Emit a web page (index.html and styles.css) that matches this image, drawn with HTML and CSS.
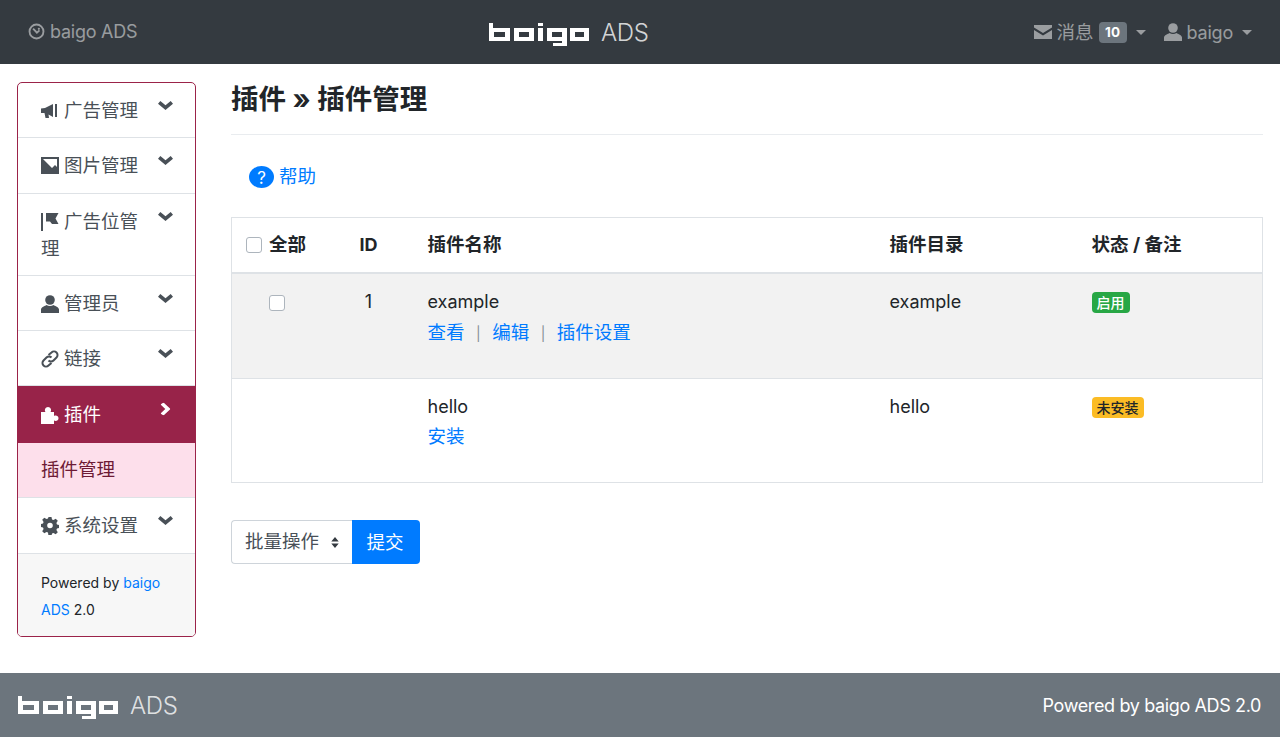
FILE: index.html
```html
<!DOCTYPE html>
<html lang="zh">
<head>
<meta charset="utf-8">
<title>插件管理</title>
<link rel="stylesheet" href="styles.css">
</head>
<body>
<svg class="defs" aria-hidden="true">
  <symbol id="logo" viewBox="0 0 100 24">
    <path fill-rule="evenodd" d="M0 0h4v5h17v13H0zM5 9v5h11V9z"/>
    <path fill-rule="evenodd" d="M25 5h20v13H25zM30 9v5h10V9z"/>
    <path d="M49 0h5v3h-5zM49 5h5v13h-5z"/>
    <path fill-rule="evenodd" d="M58 5h20v18H64v-3h9v-2H58zM63 9v5h10V9z"/>
    <path fill-rule="evenodd" d="M81 5h19v13H81zM86 9v5h9V9z"/>
  </symbol>
  <symbol id="chev" viewBox="0 0 16 10" preserveAspectRatio="none"><path d="M2.500 0 8 4.800 13.500 0 16 3 8 10 0 3z"/></symbol>
</svg>
<header class="topbar">
  <a class="brand-link">
    <svg class="brand-ic" viewBox="0 0 20 20"><circle cx="10" cy="10" r="8.200" fill="none" stroke="currentColor" stroke-width="2.200"/><path d="M6 6.500l4.500 4.800 3-2.600" fill="none" stroke="currentColor" stroke-width="2.200"/><circle cx="12.800" cy="6.800" r="1.300" fill="currentColor"/></svg>
    <span>baigo ADS</span>
  </a>
  <div class="top-logo"><svg class="logo-svg"><use href="#logo"/></svg><span class="ads">ADS</span></div>
  <nav class="top-nav">
    <a class="top-item">
      <svg class="top-ic" viewBox="0 0 18 14"><path d="M0 0h18v2.500L9 8 0 2.500zM0 5l9 5.500L18 5v9H0z" fill="currentColor"/></svg>
      <span class="cjk">消息</span><span class="count">10</span><i class="caret"></i>
    </a>
    <a class="top-item">
      <svg class="top-ic user" viewBox="0 0 18 18"><circle cx="9" cy="5" r="4.800" fill="currentColor"/><path d="M0 18v-3.500c0-2.500 4-3.500 5.500-4.500 2 1.400 5 1.400 7 0 1.500 1 5.500 2 5.500 4.500V18z" fill="currentColor"/></svg>
      <span class="tight">baigo</span><i class="caret"></i>
    </a>
  </nav>
</header>

<div class="page">
  <aside class="side">
    <a class="menu-item">
      <span class="menu-label"><svg class="mi" viewBox="0 0 18 18"><path d="M0 6.500 4 6l8-4v13L7.500 12.500 8 16H4.500L3.500 11H0zM14 2h2v13h-2z"/></svg>广告管理</span>
      <svg class="chev"><use href="#chev"/></svg>
    </a>
    <a class="menu-item">
      <span class="menu-label"><svg class="mi" viewBox="0 0 18 18"><path fill-rule="evenodd" d="M0 0h18v17H0zM2 2l9 9 3-3 2 2V2z"/></svg>图片管理</span>
      <svg class="chev"><use href="#chev"/></svg>
    </a>
    <a class="menu-item">
      <span class="menu-label"><svg class="mi" viewBox="0 0 18 18"><path d="M0 0h2v18H0zM5 0h12.500l-3 5.500 3 5.500H11L9 8.500H5z"/></svg>广告位管理</span>
      <svg class="chev"><use href="#chev"/></svg>
    </a>
    <a class="menu-item">
      <span class="menu-label"><svg class="mi" viewBox="0 0 18 18"><circle cx="9" cy="5" r="4.800"/><path d="M0 18v-3.500c0-2.500 4-3.500 5.500-4.500 2 1.400 5 1.400 7 0 1.500 1 5.500 2 5.500 4.500V18z"/></svg>管理员</span>
      <svg class="chev"><use href="#chev"/></svg>
    </a>
    <a class="menu-item">
      <span class="menu-label"><svg class="mi" viewBox="0 0 18 18"><g fill="none" stroke="currentColor" stroke-width="2"><path d="M7.500 5 10.500 2.500a3.500 3.500 0 0 1 5 5L12.500 10.500a3.500 3.500 0 0 1-5 0"/><path d="M10.500 13 7.500 15.500a3.500 3.500 0 0 1-5-5L5.500 7.500a3.500 3.500 0 0 1 5 0"/></g></svg>链接</span>
      <svg class="chev"><use href="#chev"/></svg>
    </a>
    <a class="menu-item active">
      <span class="menu-label"><svg class="mi" viewBox="0 0 18 18"><path d="M0 6h4.500C3 4 4.500 1 7 1s4 3 2.500 5H13v4c1.800-1 4.500-.3 4.500 2.200S14.800 15.500 13 14.500V18H0z"/></svg>插件</span>
      <svg class="chev right"><use href="#chev"/></svg>
    </a>
    <a class="sub-item">插件管理</a>
    <a class="menu-item">
      <span class="menu-label"><svg class="mi" viewBox="0 0 18 18"><path fill-rule="evenodd" d="M7.500 0h3l.5 2.500 1.500.6 2.200-1.400 2.100 2.100-1.400 2.200.6 1.500 2 .5v3l-2 .5-.6 1.500 1.400 2.200-2.100 2.100-2.200-1.400-1.500.6-.5 2.500h-3L7 15.500l-1.500-.6-2.200 1.400-2.100-2.100 1.400-2.200L2 10.500 0 10V7l2-.5L2.600 5 1.200 2.800 3.300.7l2.200 1.400L7 1.500zM9 5.700a2.800 2.800 0 1 0 0 5.600 2.800 2.800 0 0 0 0-5.600z"/></svg>系统设置</span>
      <svg class="chev"><use href="#chev"/></svg>
    </a>
    <div class="side-foot">Powered by <a class="link">baigo</a><br><a class="link">ADS</a> 2.0</div>
  </aside>

  <main class="content">
    <h1 class="title">插件 » 插件管理</h1>
    <div class="help"><a class="link help-link"><span class="help-ic">?</span><span class="cjk">帮助</span></a></div>
    <table class="grid">
      <thead>
        <tr>
          <th class="c-check"><label class="check-all"><span class="box"></span><span class="cjk">全部</span></label></th>
          <th class="c-id">ID</th>
          <th class="c-name cjk">插件名称</th>
          <th class="c-dir cjk">插件目录</th>
          <th class="c-state cjk">状态 / 备注</th>
        </tr>
      </thead>
      <tbody>
        <tr class="shaded">
          <td class="t-check"><span class="box"></span></td>
          <td class="t-id">1</td>
          <td>
            <div>example</div>
            <div class="actions cjk"><a class="link">查看</a><span class="sep">|</span><a class="link">编辑</a><span class="sep">|</span><a class="link">插件设置</a></div>
          </td>
          <td>example</td>
          <td><span class="badge green">启用</span></td>
        </tr>
        <tr class="plain">
          <td></td>
          <td></td>
          <td>
            <div>hello</div>
            <div class="actions install cjk"><a class="link">安装</a></div>
          </td>
          <td>hello</td>
          <td><span class="badge yellow">未安装</span></td>
        </tr>
      </tbody>
    </table>
    <div class="bulk">
      <div class="select"><span class="cjk">批量操作</span><svg class="updown" viewBox="0 0 10 14"><path d="M5 1l4 5H1zM5 13 1 8h8z"/></svg></div>
      <button class="submit cjk">提交</button>
    </div>
  </main>
</div>

<footer class="bottom">
  <div class="bottom-logo"><svg class="logo-svg"><use href="#logo"/></svg><span class="ads">ADS</span></div>
  <div class="bottom-text">Powered by baigo ADS 2.0</div>
</footer>
</body>
</html>
```
FILE: styles.css
```css
* { box-sizing: border-box; }
html, body { margin: 0; padding: 0; }
body {
  font-family: Inter, "Noto Sans CJK SC", sans-serif;
  font-size: 18px;
  line-height: 27px;
  color: #212529;
  background: #fff;
  height: 737px;
  overflow: hidden;
}
a { text-decoration: none; }
.defs { display: none; }
.link { color: #007bff; }
.cjk, .menu-label, .sub-item { font-size: 18.500px; }
.tight { letter-spacing: -.2px; }

.topbar {
  height: 64px;
  background: #343a40;
  display: grid;
  grid-template-columns: 461px auto 1fr;
  align-items: center;
  padding: 0 28px;
  color: rgba(255,255,255,.5);
}
.brand-link { display: flex; align-items: center; gap: 5px; color: rgba(255,255,255,.5); letter-spacing: -.25px; padding-bottom: 1px; }
.brand-ic { width: 17px; height: 17px; }
.top-logo { display: flex; align-items: center; gap: 12px; color: #fff; }
.logo-svg { width: 100px; height: 24px; fill: #fff; margin-top: 6px; }
.ads { font-size: 24px; font-weight: 300; line-height: 27px; color: rgba(255,255,255,.8); letter-spacing: -.3px; }
.top-nav { display: flex; justify-content: flex-end; gap: 18px; }
.top-item { display: flex; align-items: center; color: rgba(255,255,255,.5); }
.top-ic { width: 18px; height: 14px; margin-right: 5px; }
.top-ic.user { height: 18px; }
.count {
  background: #6c757d; color: #fff; font-size: 13.500px; font-weight: 700; line-height: 13px;
  padding: 4px 6.500px; border-radius: 4px; margin-left: 5px;
}
.caret {
  width: 0; height: 0; margin-left: 9px;
  border-top: 5px solid currentColor; border-left: 5px solid transparent; border-right: 5px solid transparent;
}

.page { display: flex; height: 609px; padding: 18px 17px 36px; gap: 35px; }
.side {
  width: 179px; flex: none;
  border: 1px solid #9b2349; border-radius: 5px; overflow: hidden;
}
.menu-item {
  display: flex; justify-content: space-between; align-items: flex-start;
  padding: 14px 22px 13.250px 23px;
  border-bottom: 1px solid #dee2e6;
  color: #495057;
}
.menu-item.active { background: #982349; color: #fff; border-bottom: 0; padding-top: 15px; padding-bottom: 15px; }
.menu-label { display: block; width: 100px; }
.mi { width: 18px; height: 18px; fill: currentColor; margin-right: 5px; vertical-align: -3px; }
.chev { width: 15px; height: 9px; fill: currentColor; margin-top: 4px; flex: none; }
.chev.right { transform: rotate(-90deg); width: 13px; height: 10px; margin: 3px 1px 0 0; }
.sub-item {
  display: block; height: 55px; padding: 13px 23px;
  background: #fddfeb; color: #6d1a35; border-bottom: 1px solid #dee2e6;
}
.side-foot { background: #f7f7f7; padding: 15px 23px; font-size: 14px; height: 84px; }

.content { flex: 1; min-width: 0; }
.title { margin: 0; font-size: 27.500px; font-weight: 700; line-height: 34px; padding-bottom: 18px; border-bottom: 1px solid #e9ecef; }
.help { padding: 28px 0 27px 18px; }
.help-link { display: flex; align-items: center; gap: 5px; }
.help-ic {
  width: 25px; height: 22px; border-radius: 50%; background: #007bff; color: #fff;
  text-align: center; font-size: 17px; font-weight: 400; line-height: 24px;
}
.grid { width: 100%; border-collapse: collapse; table-layout: fixed; border: 1px solid #dee2e6; }
.grid th { text-align: left; font-weight: 700; height: 55px; padding: 0 0 0 14px; border-bottom: 2px solid #dee2e6; }
.grid td { vertical-align: top; padding: 14px 0 0 14px; border-bottom: 1px solid #dee2e6; }
.shaded td { height: 106px; }
.plain td { height: 104px; }
.c-check { width: 100px; }
.c-id { width: 82px; }
.c-name { width: 462px; }
.c-dir { width: 202px; }
.grid .c-id, .grid .t-id { padding-left: 0; padding-right: 8px; text-align: center; }
.shaded { background: #f2f2f2; }
.check-all { display: flex; align-items: center; gap: 7px; }
.box { display: block; width: 16px; height: 16px; border: 1px solid #adb5bd; border-radius: 3px; background: #fff; }
.grid .t-check { padding: 21px 0 0 37px; }
.actions { margin-top: 4px; }
.actions.install { margin-top: 3px; }
.sep { color: #868e96; margin: 0 11.500px; font-size: 14px; }
.badge { display: inline-block; font-size: 14px; font-weight: 500; line-height: 13px; padding: 4px 5px; border-radius: 4px; }
.green { background: #28a745; color: #fff; }
.yellow { background: #fbbc25; color: #212529; }
.bulk { display: flex; margin-top: 37px; }
.select {
  width: 121px; height: 44px; border: 1px solid #ced4da; border-right: 0; border-radius: 4px 0 0 4px;
  display: flex; align-items: center; justify-content: space-between; padding: 0 12px 2px 13px; color: #495057;
}
.updown { width: 10px; height: 13px; fill: #343a40; margin-top: 2px; }
.submit {
  width: 68px; height: 44px; background: #007bff; color: #fff; border: 0; border-radius: 0 4px 4px 0;
  font-family: inherit; line-height: inherit; padding: 0 2px 0 0;
}
.bottom {
  height: 64px; background: #6c757d; color: #fff;
  display: flex; justify-content: space-between; align-items: center; padding: 0 19px 0 18px;
}
.bottom-logo { display: flex; align-items: center; gap: 12px; }
.bottom-text { letter-spacing: -.37px; }
```
